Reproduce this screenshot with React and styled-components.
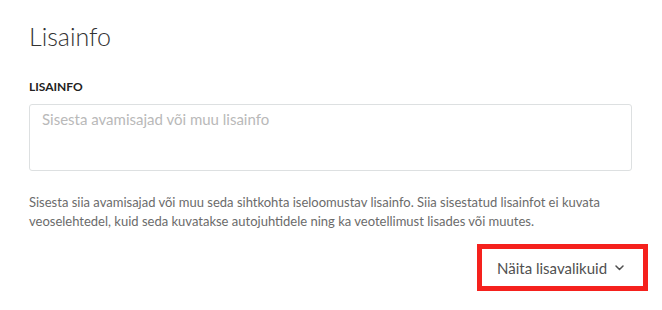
import styled, { createGlobalStyle } from "styled-components";

const GlobalStyle = createGlobalStyle`
  body {
    margin: 0;
    background: #ffffff;
    font-family: "Lato", "Open Sans", sans-serif;
  }
`;

const Page = styled.div`
  padding: 21px 14px 0 29px;
`;

const Section = styled.div`
  display: flex;
  flex-direction: column;
  margin-right: 16px;
`;

const Title = styled.h2`
  margin: 0 0 29px;
  font-size: 25px;
  font-weight: 300;
  line-height: 30px;
  color: #333333;
`;

const Label = styled.label`
  font-size: 12px;
  font-weight: 700;
  line-height: 1.2;
  color: #222222;
  text-transform: uppercase;
  margin-bottom: 10px;
`;

const TextArea = styled.textarea`
  box-sizing: border-box;
  width: 100%;
  height: 67px;
  padding: 5px 12px;
  border: 1px solid #dde0e1;
  border-radius: 3px;
  font-family: inherit;
  font-size: 15px;
  line-height: 1.2;
  color: #333333;
  resize: none;
  outline: none;

  &::placeholder {
    color: #b9b9b9;
  }
`;

const Help = styled.p`
  margin: 22px 0 0;
  font-size: 13px;
  line-height: 19px;
  color: #6b6b6b;
`;

const Footer = styled.div`
  display: flex;
  justify-content: flex-end;
  margin-top: 13px;
`;

const MoreButton = styled.button`
  display: flex;
  align-items: center;
  gap: 8px;
  box-sizing: border-box;
  width: 171px;
  height: 47px;
  padding: 0 0 0 15px;
  border: 5px solid #f5211d;
  background: #ffffff;
  font-family: inherit;
  font-size: 15px;
  color: #505050;
  cursor: pointer;
`;

const Chevron = () => (
  <svg width="9" height="6" viewBox="0 0 9 6" fill="none">
    <path
      d="M1 1l3.5 3.5L8 1"
      stroke="#505050"
      strokeWidth="1.5"
      strokeLinecap="round"
      strokeLinejoin="round"
    />
  </svg>
);

const App = () => {
  return (
    <Page>
      <GlobalStyle />
      <Section>
        <Title>Lisainfo</Title>
        <Label htmlFor="lisainfo">Lisainfo</Label>
        <TextArea
          id="lisainfo"
          placeholder="Sisesta avamisajad või muu lisainfo"
        />
        <Help>
          Sisesta siia avamisajad või muu seda sihtkohta iseloomustav lisainfo.
          Siia sisestatud lisainfot ei kuvata veoselehtedel, kuid seda kuvatakse
          autojuhtidele ning ka veotellimust lisades või muutes.
        </Help>
      </Section>
      <Footer>
        <MoreButton>
          Näita lisavalikuid
          <Chevron />
        </MoreButton>
      </Footer>
    </Page>
  );
};

export default App;
